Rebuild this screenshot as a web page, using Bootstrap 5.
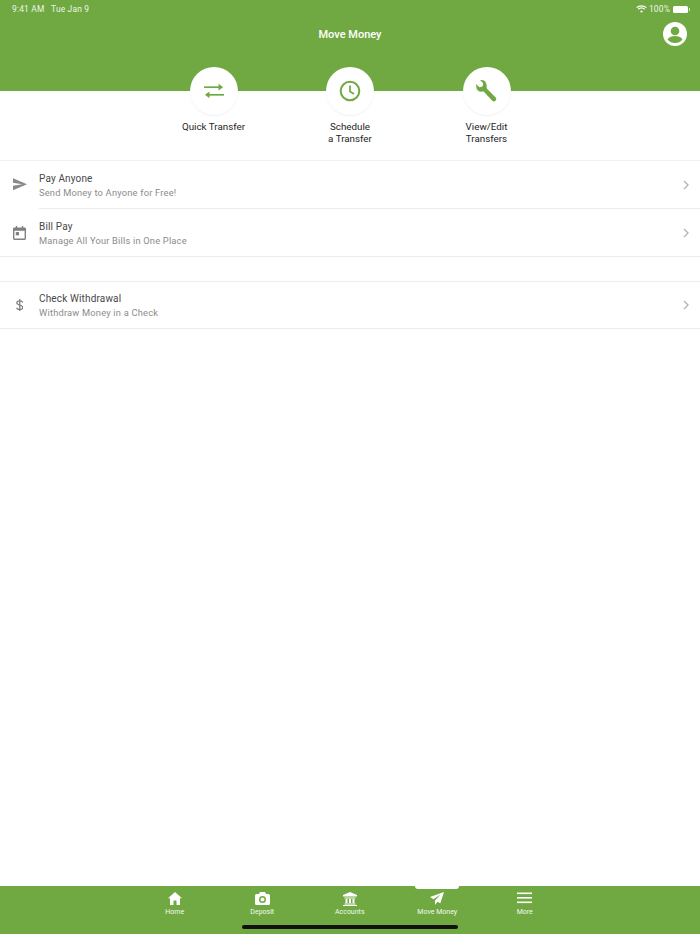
<!DOCTYPE html>
<html lang="en"><head><meta charset="utf-8">
<title>Move Money</title>
<link href="https://cdn.jsdelivr.net/npm/bootstrap@5.3.0/dist/css/bootstrap.min.css" rel="stylesheet">
<style>
html,body{height:100%;margin:0}
body{font-family:Roboto,"Liberation Sans",sans-serif;background:#fff;overflow:hidden}
.shell{height:934px;width:700px}
.hdr{background:#70a942;height:91px;flex:none}
.statusbar{height:17px;padding:1px 10px 0 12px;font-size:8.4px;line-height:16px;color:#eef5e8;letter-spacing:.2px}
.titlebar{height:34px;padding-right:13.500px}
.titletext{font-size:11px;font-weight:500;color:#fff;left:0;right:0;top:0;line-height:35px;text-align:center}
.actions{margin-top:-24px}
.action{width:136.5px}
.bubble{width:48px;height:48px;background:#fff;box-shadow:0 1px 2px rgba(0,0,0,.06);flex:none}
.actlabel{font-size:9.8px;line-height:12.5px;color:#262626;margin-top:5.500px}
.rowitem{height:48px;padding:0 11px 0 12px;background:#fff}
.rowshort{height:47px}
.rowtext{margin-left:12px;padding-top:1px}
.rowlow{padding-top:3px}
.rowborder{border-bottom:1px solid #ececec}
.inset{margin-left:39px;border-bottom:1px solid #ececec}
.rowtitle{font-size:10px;line-height:14px;color:#484848;letter-spacing:.15px}
.rowsub{font-size:9.300px;line-height:14px;color:#8b8b8b;letter-spacing:.2px}
.ricon{width:15px;flex:none}
.gaprow{height:25px;border-bottom:1px solid #ececec}
.topline{height:70px;border-bottom:1px solid #f1f1f1;flex:none}
.spacer{flex:1}
.tabbar{background:#70a942;height:48px;flex:none}
.tabitem{width:87.5px;height:32px;color:#f3f8ee;font-size:7px;line-height:9px;padding-top:6px}
.tabicon{height:16px}
.tabnote{width:44px;height:3px;background:#fff;border-radius:0 0 3px 3px;top:0;left:415px}
.homebar{width:216px;height:4px;background:#111;border-radius:2px;left:242px;bottom:5px}
.tabs{padding-left:131px}
.battery{width:15px;height:7px;background:#fff;border-radius:1.5px;margin-left:3px}
.batcap{width:1px;height:3px;background:#cfe0bf;margin-left:1px}
.wifi{margin-right:2px}
</style></head>
<body>
<div class="shell d-flex flex-column position-relative">
  <div class="hdr">
    <div class="statusbar d-flex justify-content-between">
      <div>9:41 AM&nbsp;&nbsp; Tue Jan 9</div>
      <div class="d-flex align-items-center">
        <svg class="wifi" width="11" height="8" viewBox="0 0 11 8" fill="none" stroke="#fff" stroke-width="1.2"><path d="M.6 2.6C3.4.2 7.6.2 10.4 2.6M2.2 4.3c1.9-1.6 4.7-1.6 6.600 0"/><circle cx="5.500" cy="6.500" r="1.100" fill="#fff" stroke="none"/></svg>
        <span>100%</span><span class="battery"></span><span class="batcap"></span>
      </div>
    </div>
    <div class="titlebar position-relative d-flex justify-content-end align-items-center">
      <div class="titletext position-absolute">Move Money</div>
      <svg width="24" height="24" viewBox="0 0 24 24"><circle cx="12" cy="12" r="12" fill="#fff"/><circle cx="12" cy="9" r="4.300" fill="#70a942"/><path d="M4.500 17.500C6 14.800 9 14 12 14s6 .8 7.500 3.500C17.500 20 15 21 12 21s-5.500-1-7.500-3.500z" fill="#70a942"/></svg>
    </div>
  </div>
  <div class="topline">
    <div class="actions d-flex justify-content-center">
      <div class="action d-flex flex-column align-items-center text-center">
        <div class="bubble rounded-circle d-flex align-items-center justify-content-center">
          <svg width="22" height="16" viewBox="0 0 22 16" fill="none" stroke="#70a942" stroke-width="1.700"><path d="M1 4.200h18"/><path d="M15.500 .8 20 4.200l-4.500 3.400z" fill="#70a942" stroke="none"/><path d="M21 11.800H3"/><path d="M6.500 8.400 2 11.800l4.500 3.400z" fill="#70a942" stroke="none"/></svg>
        </div>
        <div class="actlabel">Quick Transfer</div>
      </div>
      <div class="action d-flex flex-column align-items-center text-center">
        <div class="bubble rounded-circle d-flex align-items-center justify-content-center">
          <svg width="22" height="22" viewBox="0 0 22 22" fill="none" stroke="#70a942"><circle cx="11" cy="11" r="9.300" stroke-width="2"/><path d="M11 5.500V11.500l4 2.500" stroke-width="1.700"/></svg>
        </div>
        <div class="actlabel">Schedule<br>a Transfer</div>
      </div>
      <div class="action d-flex flex-column align-items-center text-center">
        <div class="bubble rounded-circle d-flex align-items-center justify-content-center">
          <svg width="24" height="24" viewBox="0 0 24 24"><path d="M8.300 1.200 5 .9l3.200 3.400-.6 3.200-3.200.7L1.200 5l.2 3.400c.2 2.800 3 4.800 6 4.200.7-.1 1.200 0 1.700.5l8.200 8.600c.9.900 2.200 1 3.100.1l.3-.3c.8-.9.800-2.200-.1-3.100l-8.300-8.300c-.5-.5-.7-1-.6-1.800.4-3.100-1-6.300-3.400-7.100z" fill="#70a942"/></svg>
        </div>
        <div class="actlabel">View/Edit<br>Transfers</div>
      </div>
    </div>
  </div>
  <div>
    <div class="rowitem rowshort d-flex align-items-center">
      <div class="ricon d-flex justify-content-center"><svg width="14" height="12.500" viewBox="0 0 15 13"><path d="M0 0 15 6.500 0 13V8l10-1.500L0 5z" fill="#8a8a8a"/></svg></div>
      <div class="rowtext rowlow flex-grow-1"><div class="rowtitle">Pay Anyone</div><div class="rowsub">Send Money to Anyone for Free!</div></div>
      <svg width="6" height="10" viewBox="0 0 6 10" fill="none" stroke="#b5b5b5" stroke-width="1.400"><path d="M1 1l4 4-4 4"/></svg>
    </div>
    <div class="inset"></div>
    <div class="rowitem d-flex align-items-center rowborder">
      <div class="ricon d-flex justify-content-center"><svg width="13" height="14" viewBox="0 0 14 15" fill="#808080"><path fill-rule="evenodd" d="M3 0h1.500v1.500h5V0H11v1.500h1.500A1.500 1.500 0 0 1 14 3v10.500a1.500 1.500 0 0 1-1.500 1.500h-11A1.500 1.500 0 0 1 0 13.500V3a1.500 1.500 0 0 1 1.500-1.500H3zM1.500 5v8.500h11V5z"/><rect x="3" y="6.500" width="3.500" height="3.500"/></svg></div>
      <div class="rowtext rowlow flex-grow-1"><div class="rowtitle">Bill Pay</div><div class="rowsub">Manage All Your Bills in One Place</div></div>
      <svg width="6" height="10" viewBox="0 0 6 10" fill="none" stroke="#b5b5b5" stroke-width="1.400"><path d="M1 1l4 4-4 4"/></svg>
    </div>
    <div class="gaprow"></div>
    <div class="rowitem rowshort d-flex align-items-center rowborder">
      <div class="ricon d-flex justify-content-center"><svg width="7.500" height="12.500" viewBox="0 0 9 15" fill="none" stroke="#808080" stroke-width="1.500"><path d="M8 4.200C7.700 3 6.300 2.300 4.500 2.300 2.500 2.300 1 3.200 1 4.600s1.200 2.100 3.500 2.700 3.700 1.300 3.700 2.900-1.600 2.500-3.700 2.500C2.500 12.700 1 11.900.7 10.500M4.500 0v15"/></svg></div>
      <div class="rowtext flex-grow-1"><div class="rowtitle">Check Withdrawal</div><div class="rowsub">Withdraw Money in a Check</div></div>
      <svg width="6" height="10" viewBox="0 0 6 10" fill="none" stroke="#b5b5b5" stroke-width="1.400"><path d="M1 1l4 4-4 4"/></svg>
    </div>
  </div>
  <div class="spacer"></div>
  <div class="tabbar position-relative">
    <div class="tabnote position-absolute"></div>
    <div class="tabs d-flex">
      <div class="tabitem text-center"><div class="tabicon"><svg width="14" height="13" viewBox="0 0 14 13" fill="#fff"><path d="M7 0 0 6.300h2V13h3.500V8.500h3V13H12V6.300h2z"/></svg></div>Home</div>
      <div class="tabitem text-center"><div class="tabicon"><svg width="15" height="13" viewBox="0 0 15 13"><path fill-rule="evenodd" fill="#fff" d="M5 0h5l1 2h2.500A1.500 1.500 0 0 1 15 3.500V11.500A1.500 1.500 0 0 1 13.500 13h-12A1.500 1.500 0 0 1 0 11.500V3.500A1.500 1.500 0 0 1 1.500 2H4zM7.500 4a3.500 3.500 0 1 0 0 7 3.500 3.500 0 0 0 0-7zm0 1.500a2 2 0 1 1 0 4 2 2 0 0 1 0-4z"/></svg></div>Deposit</div>
      <div class="tabitem text-center"><div class="tabicon"><svg width="14" height="14" viewBox="0 0 14 14" fill="#fff"><path d="M7 0 14 3v1.500H0V3z"/><rect x="1.500" y="5.500" width="11" height="1"/><rect x="2.500" y="7" width="2" height="4"/><rect x="6" y="7" width="2" height="4"/><rect x="9.500" y="7" width="2" height="4"/><rect x="1.500" y="11.500" width="11" height="1"/><rect x="0" y="13" width="14" height="1"/></svg></div>Accounts</div>
      <div class="tabitem text-center"><div class="tabicon"><svg width="14" height="13" viewBox="0 0 14 13" fill="#fff"><path d="M14 0 0 5l3.500 2.200L10.500 2.500 5 8.500v4.500l2.500-3.300 2.800 1.600z"/></svg></div>Move Money</div>
      <div class="tabitem text-center"><div class="tabicon"><svg width="15" height="12" viewBox="0 0 15 12" fill="#fff"><rect width="15" height="1.600" y=".5"/><rect width="15" height="1.600" y="5"/><rect width="15" height="1.600" y="9.500"/></svg></div>More</div>
    </div>
    <div class="homebar position-absolute"></div>
  </div>
</div>
<script src="https://cdn.jsdelivr.net/npm/bootstrap@5.3.0/dist/js/bootstrap.bundle.min.js"></script>
</body></html>
